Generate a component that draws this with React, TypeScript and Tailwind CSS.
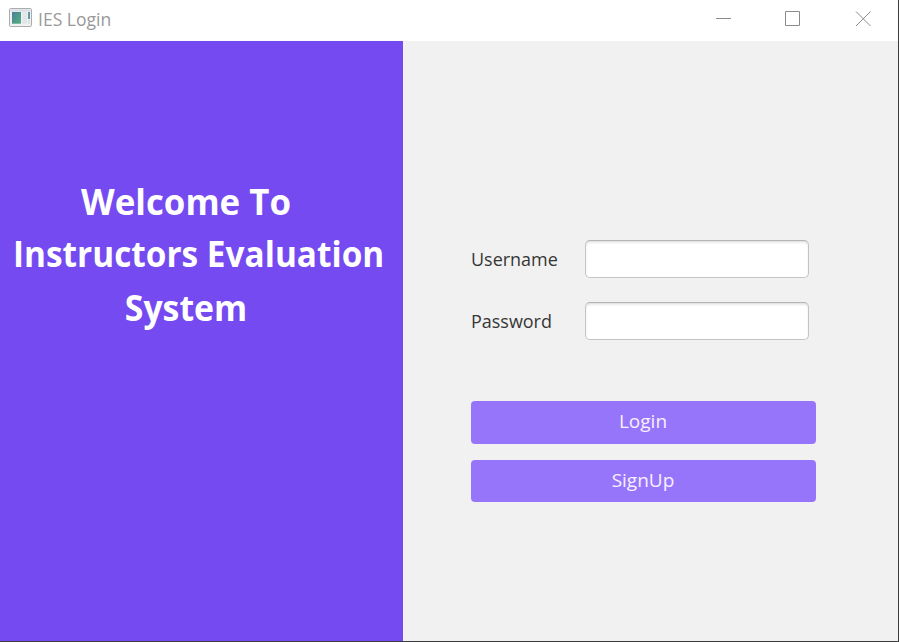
import React from "react";

function AppIcon() {
  return (
    <svg width="24" height="20" viewBox="0 0 24 20" className="block shrink-0">
      <defs>
        <linearGradient id="pane" x1="0" y1="0" x2="1" y2="1">
          <stop offset="0" stopColor="#4a8098" />
          <stop offset="1" stopColor="#55b080" />
        </linearGradient>
      </defs>
      <rect x="0.5" y="0.5" width="22" height="18" rx="1.2" fill="#eff1f2" stroke="#a9abad" />
      <rect x="1.5" y="1.5" width="20" height="2" fill="#d8dee3" />
      <rect x="3" y="4" width="9" height="11.7" fill="url(#pane)" />
      <rect x="13.5" y="4" width="4.5" height="11.7" fill="#e1e6e8" />
      <rect x="19" y="4" width="2" height="7" fill="#5f98a0" />
      <rect x="19" y="12" width="2" height="4" fill="#dbe3e0" />
    </svg>
  );
}

function TitleBar() {
  return (
    <header className="flex h-[41px] items-start bg-white pl-[9px] pr-[27px] text-[#999999]">
      <div className="pt-[8px]">
        <AppIcon />
      </div>
      <span className="ml-[5px] mt-[7px] origin-left scale-x-[0.975] text-[18px] leading-[24px]">IES Login</span>
      <div className="ml-auto flex gap-[54px] pt-[11px]">
        <svg width="16" height="16" viewBox="0 0 16 16" fill="none" stroke="#8c8c8c">
          <path d="M1 7.5H16" />
        </svg>
        <svg width="16" height="16" viewBox="0 0 16 16" fill="none" stroke="#8c8c8c">
          <path d="M0.5 0.5H14.5V14.5H0.5Z" />
        </svg>
        <svg width="16" height="16" viewBox="0 0 16 16" fill="none" stroke="#8c8c8c">
          <path d="M1 0.5L15.5 15M15.5 0.5L1 15" />
        </svg>
      </div>
    </header>
  );
}

function Field({ label, type }: { label: string; type: string }) {
  return (
    <label className="flex h-[38px] items-center">
      <span className="w-[114px] origin-left scale-x-[0.945] text-[19px] leading-[26px] text-[#363636]">{label}</span>
      <input
        type={type}
        className="h-[38px] w-[224px] rounded-[5px] border border-[#c4c4c4] border-t-[#b4b4b4] bg-white px-2 shadow-[inset_0_2px_3px_-1px_#d5d5d5] outline-none"
      />
    </label>
  );
}

function ActionButton({ children }: { children: React.ReactNode }) {
  return (
    <button className="flex h-[42.5px] w-[345px] justify-center rounded-[4px] bg-[#9775fa] pt-[7px] text-[19px] leading-[26px] text-[#f8f0ff]">
      {children}
    </button>
  );
}

export default function App() {
  return (
    <div className="flex h-[642px] w-[899px] flex-col overflow-hidden border-b border-r border-[#3c3c3c] bg-[#f1f1f1] font-['Open_Sans','Noto_Sans',sans-serif]">
      <TitleBar />
      <main className="flex flex-1">
        <section className="w-[403px] bg-[#754af1] pt-[134px]">
          <h1 className="w-[372px] text-center text-[36px] font-bold text-white">
            <span className="block scale-x-[0.968] whitespace-nowrap leading-[53px]">Welcome To</span>
            <span className="ml-[13px] block origin-left scale-x-[0.927] whitespace-nowrap text-left leading-[52px]">
              Instructors Evaluation
            </span>
            <span className="block scale-x-[0.938] whitespace-nowrap leading-[55px]">System</span>
          </h1>
        </section>
        <section className="pl-[67.5px] pt-[199px]">
          <div className="flex flex-col gap-[24px]">
            <Field label="Username" type="text" />
            <Field label="Password" type="password" />
          </div>
          <div className="mt-[61px] flex flex-col gap-[16px]">
            <ActionButton>Login</ActionButton>
            <ActionButton>SignUp</ActionButton>
          </div>
        </section>
      </main>
    </div>
  );
}
